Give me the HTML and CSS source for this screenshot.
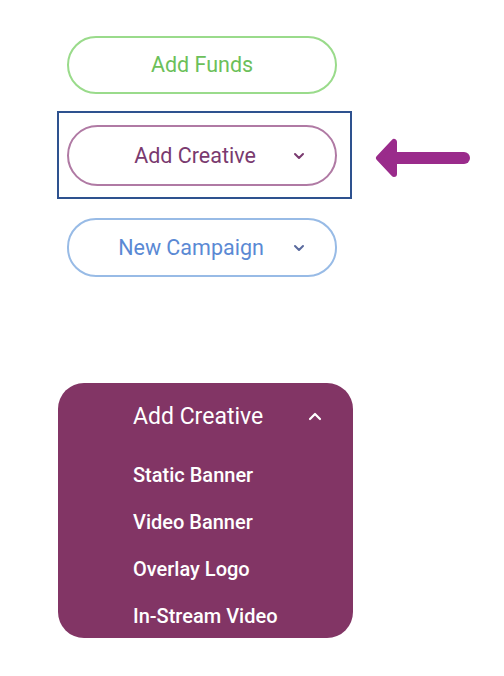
FILE: index.html
```html
<!DOCTYPE html>
<html>
<head>
<meta charset="utf-8">
<link rel="stylesheet" href="styles.css">
</head>
<body>
<div class="page">
  <button class="pill pill-green"><span class="label">Add Funds</span></button>
  <div class="row">
    <div class="focus-frame">
      <button class="pill pill-purple">
        <span class="label">Add Creative</span>
        <svg class="chev" width="12" height="8" viewBox="0 0 12 8"><path d="M2 2 L6 6 L10 2" fill="none" stroke="currentColor" stroke-width="2" stroke-linecap="round" stroke-linejoin="round"/></svg>
      </button>
    </div>
    <svg class="arrow" width="96" height="44" viewBox="0 0 96 44">
      <path d="M12 22 H90" stroke="#9a2b8b" stroke-width="12" stroke-linecap="round"/>
      <path d="M5 22 L20 6 L20 38 Z" fill="#9a2b8b" stroke="#9a2b8b" stroke-width="6" stroke-linejoin="round"/>
    </svg>
  </div>
  <button class="pill pill-blue">
    <span class="label">New Campaign</span>
    <svg class="chev" width="12" height="8" viewBox="0 0 12 8"><path d="M2 2 L6 6 L10 2" fill="none" stroke="currentColor" stroke-width="2" stroke-linecap="round" stroke-linejoin="round"/></svg>
  </button>
  <div class="menu">
    <div class="menu-head">
      <span class="menu-title">Add Creative</span>
      <svg class="chev-up" width="14" height="9" viewBox="0 0 14 9"><path d="M2 7 L7 2 L12 7" fill="none" stroke="#ffffff" stroke-width="2.2" stroke-linecap="round" stroke-linejoin="round"/></svg>
    </div>
    <ul class="menu-list">
      <li>Static Banner</li>
      <li>Video Banner</li>
      <li>Overlay Logo</li>
      <li>In-Stream Video</li>
    </ul>
  </div>
</div>
</body>
</html>
```

FILE: styles.css
```css
html, body {
  margin: 0;
  padding: 0;
  background: #ffffff;
}
body {
  font-family: Roboto, "Liberation Sans", sans-serif;
  width: 504px;
  height: 676px;
  overflow: hidden;
}
.page {
  padding: 36px 0 0 57px;
  display: flex;
  flex-direction: column;
  align-items: flex-start;
}
.pill {
  box-sizing: border-box;
  width: 270px;
  height: 58px;
  border-radius: 29px;
  background: #ffffff;
  border: 2px solid;
  font-family: inherit;
  font-size: 21.5px;
  display: flex;
  align-items: center;
  padding: 0;
  position: relative;
}
.pill .label {
  flex: 1;
  text-align: center;
}
.pill-green {
  margin-left: 10px;
  border-color: #9adb8b;
  color: #6cc05a;
}
.pill-green .label {
  padding: 0 0 2px 0;
}
.row {
  display: flex;
  align-items: center;
  margin-top: 17px;
}
.focus-frame {
  box-sizing: border-box;
  width: 295px;
  height: 88px;
  border: 2px solid #2e528f;
  padding: 12px 0 0 8px;
}
.pill-purple {
  height: 61px;
  border-radius: 31px;
  border-color: #b07aa4;
  color: #7a3a6f;
  padding: 0 30px 0 28px;
}
.pill-blue {
  margin-left: 10px;
  margin-top: 19px;
  height: 59px;
  border-color: #98bbe6;
  color: #5a89d4;
  padding: 0 30px 0 20px;
}
.chev {
  flex: none;
  color: #7a3a6f;
}
.pill-blue .chev {
  color: #5a6a9e;
}
.arrow {
  margin-left: 22px;
  margin-top: 6px;
  display: block;
}
.menu {
  box-sizing: border-box;
  margin-top: 106px;
  margin-left: 1px;
  width: 295px;
  height: 255px;
  background: #823565;
  border-radius: 26px;
  color: #ffffff;
  padding: 18px 30px 0 75px;
}
.menu-head {
  display: flex;
  align-items: center;
  justify-content: space-between;
  height: 30px;
}
.menu-title {
  font-size: 23px;
}
.chev-up {
  display: block;
  margin-right: 1px;
}
.menu-list {
  list-style: none;
  margin: 30px 0 0 0;
  padding: 0;
}
.menu-list li {
  font-size: 20px;
  font-weight: 500;
  height: 47px;
  line-height: 28px;
}
```
